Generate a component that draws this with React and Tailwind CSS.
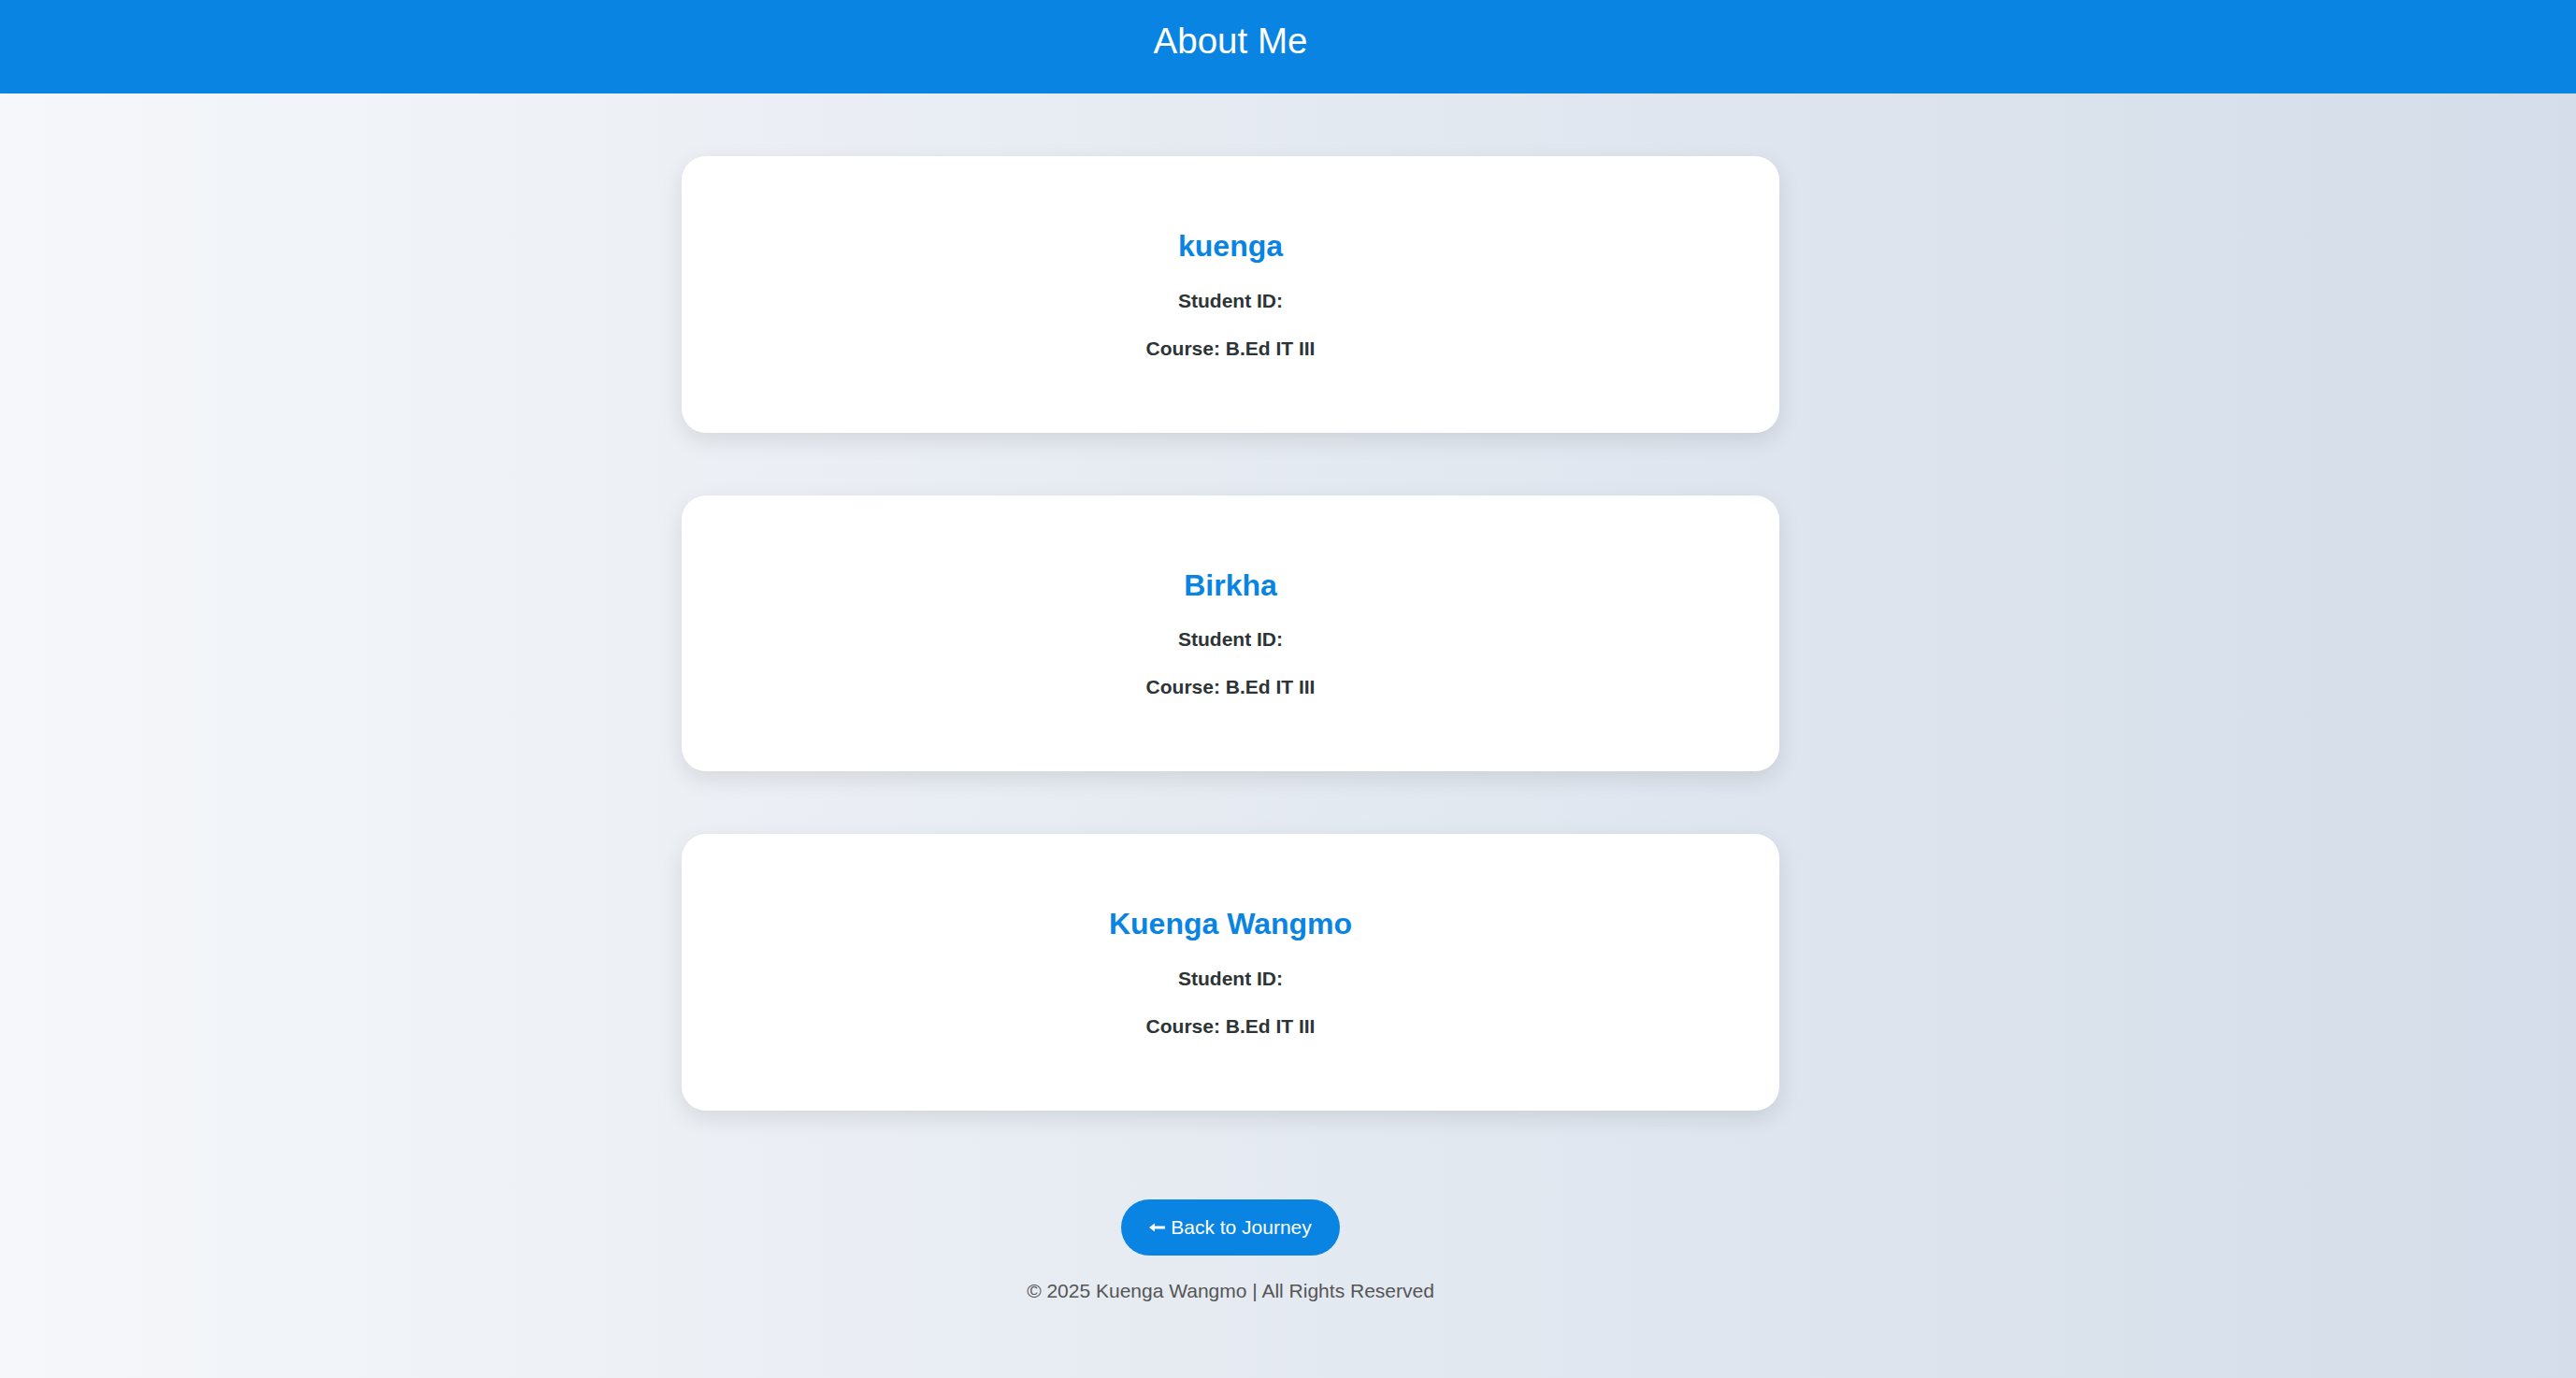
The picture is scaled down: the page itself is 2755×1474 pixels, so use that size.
const members = [
  { name: "kuenga", id: "", course: "B.Ed IT III" },
  { name: "Birkha", id: "", course: "B.Ed IT III" },
  { name: "Kuenga Wangmo", id: "", course: "B.Ed IT III" },
];

function MemberCard({ member }) {
  return (
    <div className="w-[1174px] bg-white rounded-[26px] shadow-[0_8px_24px_rgba(0,0,0,0.1)] pt-[78px] pb-[78px] flex flex-col items-center gap-[27px] text-center">
      <h2 className="text-[32px] leading-[37px] font-bold text-[#0984e3] mb-[0.5px]">{member.name}</h2>
      <p className="text-[21px] leading-[24px] font-bold text-[#2d3436]">Student ID: {member.id}</p>
      <p className="text-[21px] leading-[24px] font-bold text-[#2d3436]">Course: {member.course}</p>
    </div>
  );
}

export default function App() {
  return (
    <div
      className="min-h-screen bg-[linear-gradient(90deg,#f5f7fa_0%,#d4dde9_100%)]"
      style={{ fontFamily: '"Liberation Sans", Arial, sans-serif' }}
    >
      <header className="h-[100px] bg-[#0984e3] pr-[123px] pt-[22px]">
        <h1 className="text-center text-white text-[38.5px] leading-[44px] font-normal">About Me</h1>
      </header>

      <main className="pr-[123px] pt-[67px] flex flex-col items-center gap-[67px]">
        {members.map((m) => (
          <MemberCard key={m.name} member={m} />
        ))}
      </main>

      <footer className="pr-[123px] pt-[95px] pb-[40px] flex flex-col items-center">
        <button className="w-[234px] h-[60px] rounded-full bg-[#0984e3] text-white text-[21px] flex items-center justify-center gap-[6px]">
          <svg width="17" height="12" viewBox="0 0 17 12" className="mt-[1px]">
            <path d="M0 6 L6 1.5 L6 10.5 Z" fill="white" />
            <rect x="5" y="4.5" width="12" height="3" fill="white" />
          </svg>
          <span>Back to Journey</span>
        </button>
        <p className="mt-[26px] text-[21px] leading-[24px] text-[#555]">
          © 2025 Kuenga Wangmo | All Rights Reserved
        </p>
      </footer>
    </div>
  );
}
